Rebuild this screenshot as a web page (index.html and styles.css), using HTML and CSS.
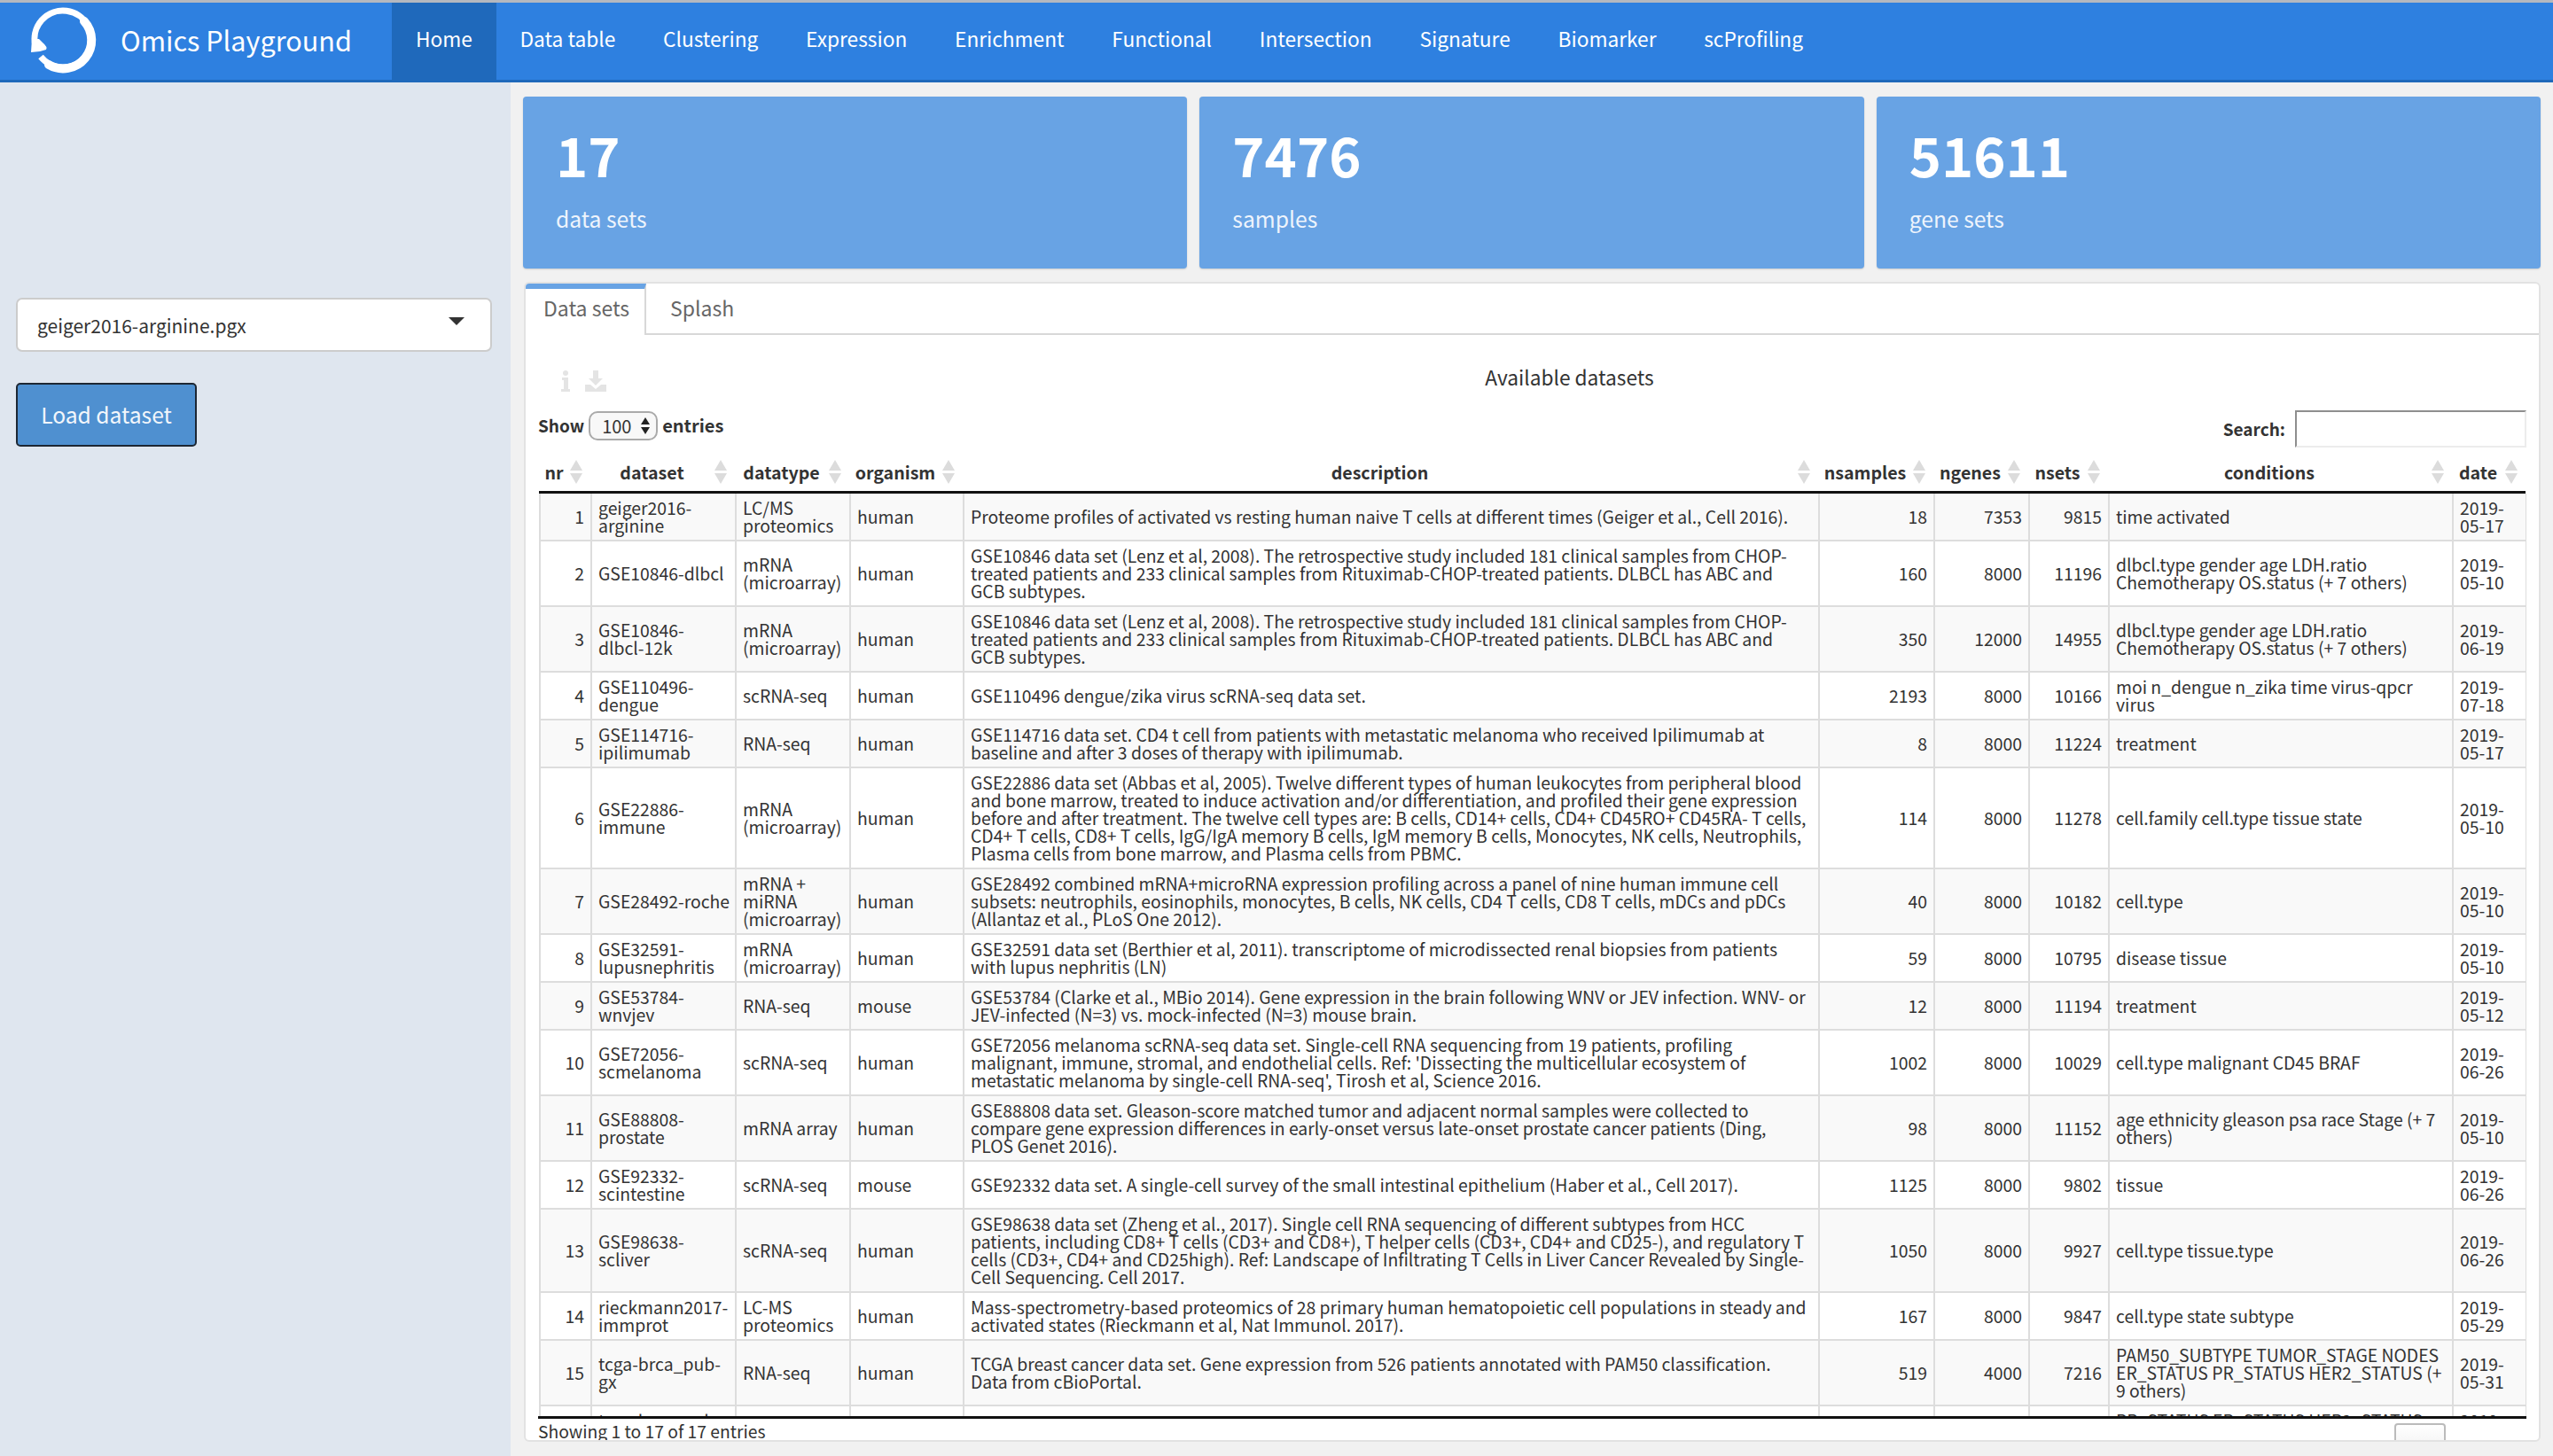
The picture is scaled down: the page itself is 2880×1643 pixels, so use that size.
FILE: index.html
```html
<!DOCTYPE html>
<html lang="en">

<head>
    <meta charset="UTF-8">
    <title>Omics Playground</title>
    <link rel="stylesheet" href="styles.css">
</head>

<body>

    <nav class="navbar">
        <div class="brand">
            <svg class="logo" viewBox="0 0 78 78" width="78" height="78">
                <path d="M7 44 A32 32 0 1 1 13 56" fill="none" stroke="#fff" stroke-width="7" />
                <path d="M62 16 A32 32 0 0 1 22 65" fill="none" stroke="#fff" stroke-width="10" stroke-linecap="round" />
                <path d="M2 51 L3 36 L11 36 L15 40 Q21 45 19 48 L12 50 Z" fill="#fff" />
            </svg>
            <span class="brand-name">Omics Playground</span>
        </div>
        <a class="nav-item active">Home</a>
        <a class="nav-item">Data table</a>
        <a class="nav-item">Clustering</a>
        <a class="nav-item">Expression</a>
        <a class="nav-item">Enrichment</a>
        <a class="nav-item">Functional</a>
        <a class="nav-item">Intersection</a>
        <a class="nav-item">Signature</a>
        <a class="nav-item">Biomarker</a>
        <a class="nav-item">scProfiling</a>
    </nav>

    <div class="page">
        <aside class="sidebar">
            <div class="picker">
                <span>geiger2016-arginine.pgx</span>
                <i class="caret"></i>
            </div>
            <button class="load-btn">Load dataset</button>
        </aside>

        <main class="content">
            <div class="stats">
                <div class="stat-box">
                    <div class="stat-num">17</div>
                    <div class="stat-label">data sets</div>
                </div>
                <div class="stat-box">
                    <div class="stat-num">7476</div>
                    <div class="stat-label">samples</div>
                </div>
                <div class="stat-box">
                    <div class="stat-num">51611</div>
                    <div class="stat-label">gene sets</div>
                </div>
            </div>

            <section class="tabbox">
                <div class="tabs">
                    <a class="tab active">Data sets</a>
                    <a class="tab">Splash</a>
                    <div class="tab-rest"></div>
                </div>

                <div class="tab-body">
                    <div class="toolbar">
                        <div class="tools">
                            <svg width="10" height="24" viewBox="0 0 10 24">
                                <circle cx="5" cy="3" r="3" fill="#e4e4e4" />
                                <path d="M1 8h7v13h2v3H0v-3h3V11H1z" fill="#e4e4e4" />
                            </svg>
                            <svg width="24" height="24" viewBox="0 0 24 24">
                                <path d="M9 0h6v9h5l-8 8-8-8h5z" fill="#e4e4e4" />
                                <path d="M0 16h6l6 5 6-5h6v8H0z" fill="#e4e4e4" />
                            </svg>
                        </div>
                        <div class="table-title">Available datasets</div>
                    </div>

                    <div class="controls">
                        <div class="length">
                            <span class="show">Show</span>
                            <span class="length-select">100<i class="spin"></i></span>
                            entries
                        </div>
                        <div class="search">
                            Search:
                            <input class="search-input" type="text">
                        </div>
                    </div>

                    <table class="dt dt-head">
                        <colgroup>
                            <col class="c-nr"><col class="c-set"><col class="c-type"><col class="c-org"><col class="c-desc"><col class="c-ns"><col class="c-ng"><col class="c-nx"><col class="c-cond"><col class="c-date">
                        </colgroup>
                        <thead>
                            <tr>
                                <th>nr</th>
                                <th>dataset</th>
                                <th>datatype</th>
                                <th>organism</th>
                                <th>description</th>
                                <th>nsamples</th>
                                <th>ngenes</th>
                                <th>nsets</th>
                                <th>conditions</th>
                                <th>date</th>
                            </tr>
                        </thead>
                    </table>

                    <div class="scroll">
                        <table class="dt dt-body">
                            <colgroup>
                                <col class="c-nr"><col class="c-set"><col class="c-type"><col class="c-org"><col class="c-desc"><col class="c-ns"><col class="c-ng"><col class="c-nx"><col class="c-cond"><col class="c-date">
                            </colgroup>
                            <tbody>
                                <tr>
                                    <td class="num">1</td><td>geiger2016-<br>arginine</td><td>LC/MS<br>proteomics</td><td>human</td>
                                    <td>Proteome profiles of activated vs resting human naive T cells at different times (Geiger et al., Cell 2016).</td>
                                    <td class="num">18</td><td class="num">7353</td><td class="num">9815</td><td>time activated</td><td>2019-<br>05-17</td>
                                </tr>
                                <tr>
                                    <td class="num">2</td><td>GSE10846-dlbcl</td><td>mRNA<br>(microarray)</td><td>human</td>
                                    <td>GSE10846 data set (Lenz et al, 2008). The retrospective study included 181 clinical samples from CHOP-<br>treated patients and 233 clinical samples from Rituximab-CHOP-treated patients. DLBCL has ABC and<br>GCB subtypes.</td>
                                    <td class="num">160</td><td class="num">8000</td><td class="num">11196</td><td>dlbcl.type gender age LDH.ratio<br>Chemotherapy OS.status (+ 7 others)</td><td>2019-<br>05-10</td>
                                </tr>
                                <tr>
                                    <td class="num">3</td><td>GSE10846-<br>dlbcl-12k</td><td>mRNA<br>(microarray)</td><td>human</td>
                                    <td>GSE10846 data set (Lenz et al, 2008). The retrospective study included 181 clinical samples from CHOP-<br>treated patients and 233 clinical samples from Rituximab-CHOP-treated patients. DLBCL has ABC and<br>GCB subtypes.</td>
                                    <td class="num">350</td><td class="num">12000</td><td class="num">14955</td><td>dlbcl.type gender age LDH.ratio<br>Chemotherapy OS.status (+ 7 others)</td><td>2019-<br>06-19</td>
                                </tr>
                                <tr>
                                    <td class="num">4</td><td>GSE110496-<br>dengue</td><td>scRNA-seq</td><td>human</td>
                                    <td>GSE110496 dengue/zika virus scRNA-seq data set.</td>
                                    <td class="num">2193</td><td class="num">8000</td><td class="num">10166</td><td>moi n_dengue n_zika time virus-qpcr<br>virus</td><td>2019-<br>07-18</td>
                                </tr>
                                <tr>
                                    <td class="num">5</td><td>GSE114716-<br>ipilimumab</td><td>RNA-seq</td><td>human</td>
                                    <td>GSE114716 data set. CD4 t cell from patients with metastatic melanoma who received Ipilimumab at<br>baseline and after 3 doses of therapy with ipilimumab.</td>
                                    <td class="num">8</td><td class="num">8000</td><td class="num">11224</td><td>treatment</td><td>2019-<br>05-17</td>
                                </tr>
                                <tr>
                                    <td class="num">6</td><td>GSE22886-<br>immune</td><td>mRNA<br>(microarray)</td><td>human</td>
                                    <td>GSE22886 data set (Abbas et al, 2005). Twelve different types of human leukocytes from peripheral blood<br>and bone marrow, treated to induce activation and/or differentiation, and profiled their gene expression<br>before and after treatment. The twelve cell types are: B cells, CD14+ cells, CD4+ CD45RO+ CD45RA- T cells,<br>CD4+ T cells, CD8+ T cells, IgG/IgA memory B cells, IgM memory B cells, Monocytes, NK cells, Neutrophils,<br>Plasma cells from bone marrow, and Plasma cells from PBMC.</td>
                                    <td class="num">114</td><td class="num">8000</td><td class="num">11278</td><td>cell.family cell.type tissue state</td><td>2019-<br>05-10</td>
                                </tr>
                                <tr>
                                    <td class="num">7</td><td>GSE28492-roche</td><td>mRNA +<br>miRNA<br>(microarray)</td><td>human</td>
                                    <td>GSE28492 combined mRNA+microRNA expression profiling across a panel of nine human immune cell<br>subsets: neutrophils, eosinophils, monocytes, B cells, NK cells, CD4 T cells, CD8 T cells, mDCs and pDCs<br>(Allantaz et al., PLoS One 2012).</td>
                                    <td class="num">40</td><td class="num">8000</td><td class="num">10182</td><td>cell.type</td><td>2019-<br>05-10</td>
                                </tr>
                                <tr>
                                    <td class="num">8</td><td>GSE32591-<br>lupusnephritis</td><td>mRNA<br>(microarray)</td><td>human</td>
                                    <td>GSE32591 data set (Berthier et al, 2011). transcriptome of microdissected renal biopsies from patients<br>with lupus nephritis (LN)</td>
                                    <td class="num">59</td><td class="num">8000</td><td class="num">10795</td><td>disease tissue</td><td>2019-<br>05-10</td>
                                </tr>
                                <tr>
                                    <td class="num">9</td><td>GSE53784-<br>wnvjev</td><td>RNA-seq</td><td>mouse</td>
                                    <td>GSE53784 (Clarke et al., MBio 2014). Gene expression in the brain following WNV or JEV infection. WNV- or<br>JEV-infected (N=3) vs. mock-infected (N=3) mouse brain.</td>
                                    <td class="num">12</td><td class="num">8000</td><td class="num">11194</td><td>treatment</td><td>2019-<br>05-12</td>
                                </tr>
                                <tr>
                                    <td class="num">10</td><td>GSE72056-<br>scmelanoma</td><td>scRNA-seq</td><td>human</td>
                                    <td>GSE72056 melanoma scRNA-seq data set. Single-cell RNA sequencing from 19 patients, profiling<br>malignant, immune, stromal, and endothelial cells. Ref: 'Dissecting the multicellular ecosystem of<br>metastatic melanoma by single-cell RNA-seq', Tirosh et al, Science 2016.</td>
                                    <td class="num">1002</td><td class="num">8000</td><td class="num">10029</td><td>cell.type malignant CD45 BRAF</td><td>2019-<br>06-26</td>
                                </tr>
                                <tr>
                                    <td class="num">11</td><td>GSE88808-<br>prostate</td><td>mRNA array</td><td>human</td>
                                    <td>GSE88808 data set. Gleason-score matched tumor and adjacent normal samples were collected to<br>compare gene expression differences in early-onset versus late-onset prostate cancer patients (Ding,<br>PLOS Genet 2016).</td>
                                    <td class="num">98</td><td class="num">8000</td><td class="num">11152</td><td>age ethnicity gleason psa race Stage (+ 7<br>others)</td><td>2019-<br>05-10</td>
                                </tr>
                                <tr>
                                    <td class="num">12</td><td>GSE92332-<br>scintestine</td><td>scRNA-seq</td><td>mouse</td>
                                    <td>GSE92332 data set. A single-cell survey of the small intestinal epithelium (Haber et al., Cell 2017).</td>
                                    <td class="num">1125</td><td class="num">8000</td><td class="num">9802</td><td>tissue</td><td>2019-<br>06-26</td>
                                </tr>
                                <tr>
                                    <td class="num">13</td><td>GSE98638-<br>scliver</td><td>scRNA-seq</td><td>human</td>
                                    <td>GSE98638 data set (Zheng et al., 2017). Single cell RNA sequencing of different subtypes from HCC<br>patients, including CD8+ T cells (CD3+ and CD8+), T helper cells (CD3+, CD4+ and CD25-), and regulatory T<br>cells (CD3+, CD4+ and CD25high). Ref: Landscape of Infiltrating T Cells in Liver Cancer Revealed by Single-<br>Cell Sequencing. Cell 2017.</td>
                                    <td class="num">1050</td><td class="num">8000</td><td class="num">9927</td><td>cell.type tissue.type</td><td>2019-<br>06-26</td>
                                </tr>
                                <tr>
                                    <td class="num">14</td><td>rieckmann2017-<br>immprot</td><td>LC-MS<br>proteomics</td><td>human</td>
                                    <td>Mass-spectrometry-based proteomics of 28 primary human hematopoietic cell populations in steady and<br>activated states (Rieckmann et al, Nat Immunol. 2017).</td>
                                    <td class="num">167</td><td class="num">8000</td><td class="num">9847</td><td>cell.type state subtype</td><td>2019-<br>05-29</td>
                                </tr>
                                <tr>
                                    <td class="num">15</td><td>tcga-brca_pub-<br>gx</td><td>RNA-seq</td><td>human</td>
                                    <td>TCGA breast cancer data set. Gene expression from 526 patients annotated with PAM50 classification.<br>Data from cBioPortal.</td>
                                    <td class="num">519</td><td class="num">4000</td><td class="num">7216</td><td>PAM50_SUBTYPE TUMOR_STAGE NODES<br>ER_STATUS PR_STATUS HER2_STATUS (+<br>9 others)</td><td>2019-<br>05-31</td>
                                </tr>
                                <tr>
                                    <td class="num">16</td><td>tcga-brca_pub-<br>rnaseq</td><td>RNA-seq</td><td>human</td>
                                    <td>TCGA breast cancer data set.</td>
                                    <td class="num">1095</td><td class="num">8000</td><td class="num">7216</td><td>PR_STATUS ER_STATUS HER2_STATUS<br>(+ 3 others)</td><td>2019-<br>05-31</td>
                                </tr>
                            </tbody>
                        </table>
                    </div>

                    <div class="table-foot">
                        <span class="foot-info">Showing 1 to 17 of 17 entries</span>
                        <div class="pager">
                            <span class="page-link">Previous</span>
                            <span class="page-btn">1</span>
                            <span class="page-link">Next</span>
                        </div>
                    </div>
                </div>
            </section>
        </main>
    </div>

</body>

</html>
```

FILE: styles.css
```css
* {
    box-sizing: border-box;
}

html,
body {
    height: 1643px;
    margin: 0;
    overflow: hidden;
}

body {
    font-family: 'Noto Sans CJK SC', 'Open Sans', sans-serif;
    font-size: 20px;
    line-height: 20px;
    color: #333;
    background: #f1f1f1;
    border-top: 3px solid #b4b8bf;
    display: flex;
    flex-direction: column;
}

/* top bar */
.navbar {
    height: 90px;
    flex: none;
    display: flex;
    align-items: stretch;
    background: #2e80e0;
    border-bottom: 3px solid #1f69bb;
    color: #fff;
}

.brand {
    width: 442px;
    display: flex;
    align-items: center;
    padding-left: 33px;
    gap: 25px;
}

.brand-name {
    font-size: 30.6px;
    line-height: 40px;
    padding-bottom: 4px;
}

.nav-item {
    font-size: 22.7px;
    line-height: 46px;
    padding: 18px 26.9px 23px;
}

.nav-item.active {
    background: #1f69bb;
}

.page {
    flex: 1;
    display: flex;
    min-height: 0;
}

/* left panel */
.sidebar {
    width: 576px;
    flex: none;
    background: #dfe6ef;
    padding: 243px 21px 0 18px;
}

.picker {
    height: 61px;
    background: #fff;
    border: 2px solid #ccc;
    border-radius: 7px;
    padding: 0 29px 0 22px;
    display: flex;
    align-items: center;
    justify-content: space-between;
    font-size: 21px;
}

.caret {
    width: 0;
    height: 0;
    border-left: 9px solid transparent;
    border-right: 9px solid transparent;
    border-top: 9px solid #333;
    margin-top: -8px;
}

.load-btn {
    display: block;
    margin-top: 35px;
    width: 204px;
    height: 72px;
    background: #4f90d0;
    border: 2px solid #1d2733;
    border-radius: 5px;
    color: #f2f6fb;
    font-family: inherit;
    font-size: 24.6px;
    padding-bottom: 4px;
}

/* main column */
.content {
    flex: 1;
    min-width: 0;
    padding: 16px 14px 16px 14px;
    display: flex;
    flex-direction: column;
}

.stats {
    display: flex;
    gap: 14px;
    height: 194px;
    flex: none;
}

.stat-box {
    flex: 1;
    background: #68a3e4;
    border-radius: 4px;
    box-shadow: 0 1px 2px rgba(0, 0, 0, 0.15);
    color: #fff;
    padding: 25px 37px;
}

.stat-num {
    font-size: 61.5px;
    line-height: 80px;
    font-weight: 700;
}

.stat-label {
    font-size: 24.7px;
    line-height: 34px;
    margin-top: 15px;
    color: #eef4fc;
}

.tabbox {
    flex: none;
    height: 1309px;
    margin-top: 15px;
    margin-left: 1px;
    background: #fff;
    border: 2px solid #e2e2e2;
    border-radius: 6px;
    overflow: hidden;
    display: flex;
    flex-direction: column;
}

.tabs {
    display: flex;
    height: 58px;
    flex: none;
    font-size: 23px;
    color: #666;
}

.tab {
    padding: 12px 21px 0 27px;
    line-height: 30px;
    border-bottom: 2px solid #d8d8d8;
}

.tab.active {
    width: 136px;
    border-top: 6px solid #68a3e4;
    border-bottom: none;
    border-right: 2px solid #d8d8d8;
    padding: 6px 0 0 20px;
}

.tab-rest {
    flex: 1;
    border-bottom: 2px solid #d8d8d8;
}

.tab-body {
    padding: 0 14px 0 14px;
    flex: 1;
    min-height: 0;
    display: flex;
    flex-direction: column;
}

.toolbar {
    height: 82px;
    flex: none;
    display: flex;
    align-items: flex-start;
    position: relative;
    padding: 40px 0 0 26px;
}

.tools {
    display: flex;
    gap: 17px;
    align-items: flex-start;
    height: 26px;
}

.table-title {
    position: absolute;
    left: 0;
    right: 0;
    top: 33px;
    text-align: center;
    font-size: 22.7px;
    line-height: 30px;
    padding-left: 84px;
}

.controls {
    height: 50px;
    margin-top: 2px;
    flex: none;
    display: flex;
    justify-content: space-between;
    font-weight: 700;
}

.length {
    display: flex;
    align-items: flex-start;
    gap: 5px;
    line-height: 35px;
}

.show {
    font-size: 19px;
}

.length-select {
    width: 78px;
    height: 33px;
    margin-top: 2px;
    background: #f8f8f8;
    border: 2px solid #aaa;
    border-radius: 10px;
    font-weight: 400;
    line-height: 30px;
    padding-left: 13px;
    position: relative;
}

.spin {
    position: absolute;
    right: 7px;
    top: 5px;
    width: 0;
    height: 0;
    border-left: 5px solid transparent;
    border-right: 5px solid transparent;
    border-bottom: 8px solid #222;
}

.spin::after {
    content: "";
    position: absolute;
    left: -5px;
    top: 11px;
    border-left: 5px solid transparent;
    border-right: 5px solid transparent;
    border-top: 8px solid #222;
}

.search {
    display: flex;
    align-items: flex-start;
    gap: 11px;
    line-height: 44px;
    font-size: 19px;
}

.search-input {
    width: 261px;
    height: 42px;
    margin-top: 1px;
    border: 2px solid #ececec;
    border-top-color: #8e8e8e;
    border-left-color: #8e8e8e;
    background: #fff;
    padding: 0;
}

/* table */
.dt {
    width: 2241px;
    margin-left: 1px;
    table-layout: fixed;
    border-collapse: collapse;
}

.c-nr { width: 58px; }
.c-set { width: 163px; }
.c-type { width: 129px; }
.c-org { width: 128px; }
.c-desc { width: 965px; }
.c-ns { width: 130px; }
.c-ng { width: 107px; }
.c-nx { width: 90px; }
.c-cond { width: 388px; }
.c-date { width: 83px; }

.dt-head {
    flex: none;
    border-bottom: 3px solid #111;
}

.dt-head th {
    height: 43px;
    padding: 0 28px 0 4px;
    text-align: center;
    font-size: 19.6px;
    font-weight: 700;
    position: relative;
    white-space: nowrap;
}

.dt-head th::before,
.dt-head th::after {
    content: "";
    position: absolute;
    right: 9px;
    border-left: 7px solid transparent;
    border-right: 7px solid transparent;
}

.dt-head th::before {
    top: 7px;
    border-bottom: 12px solid #dcdcdc;
}

.dt-head th::after {
    top: 22px;
    border-top: 12px solid #dcdcdc;
}

.scroll {
    height: 1044px;
    flex: none;
    overflow: hidden;
    border-bottom: 3px solid #111;
}

.dt-body td {
    border: 2px solid #ddd;
    padding: 6px 7px;
    vertical-align: middle;
    font-size: 19.36px;
    white-space: nowrap;
    overflow: hidden;
}

.dt-body tr:first-child td {
    border-top: none;
}

.dt-body tr:nth-child(odd) td {
    background: #f9f9f9;
}

.dt-body td.num {
    text-align: right;
}

.table-foot {
    flex: 1;
    min-height: 0;
    display: flex;
    justify-content: space-between;
    line-height: 32px;
    font-size: 19.3px;
    overflow: hidden;
}

.foot-info {
    margin-top: -2px;
}

.pager {
    display: flex;
    gap: 32px;
    padding-top: 5px;
    padding-right: 18px;
    color: #888;
}

.page-btn {
    width: 58px;
    height: 40px;
    border: 2px solid #bbb;
    border-radius: 4px;
    background: linear-gradient(#fff, #eee);
    text-align: center;
    padding-top: 20px;
}

.page-link {
    padding-top: 16px;
}
```
